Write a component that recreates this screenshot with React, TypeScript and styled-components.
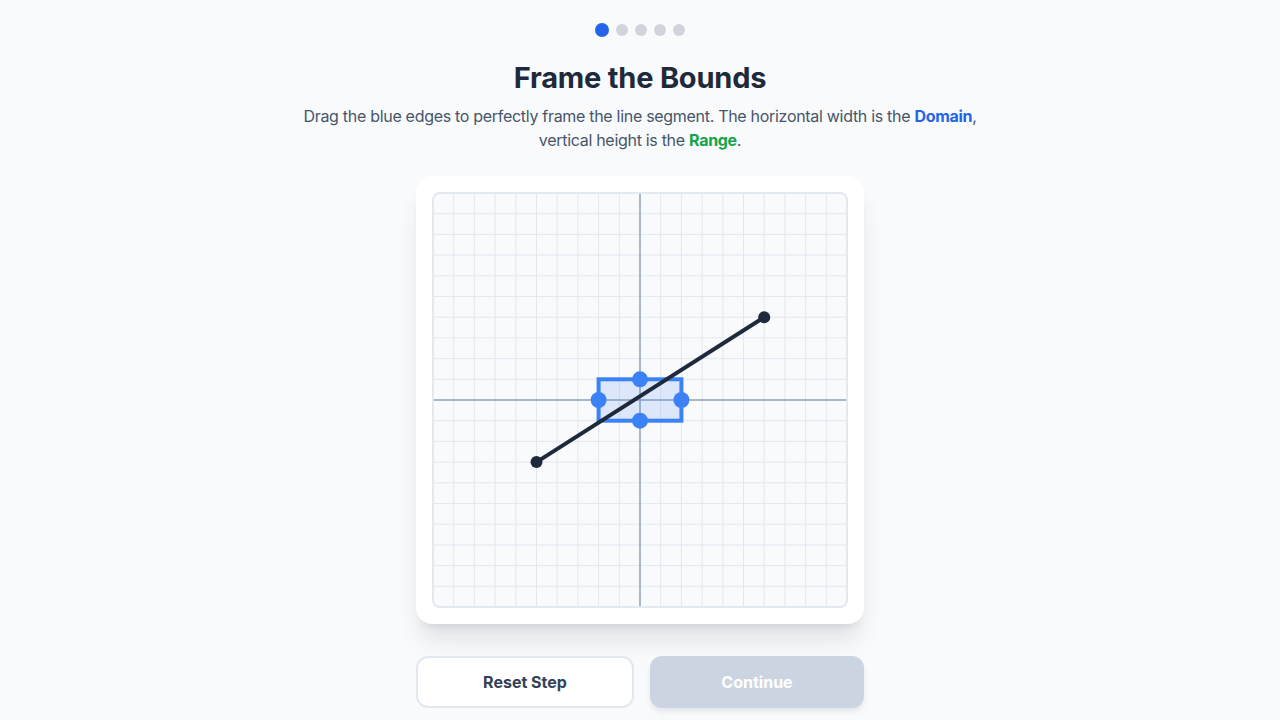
import styled, { createGlobalStyle } from "styled-components";

const GlobalStyle = createGlobalStyle`
  * { box-sizing: border-box; }
  body {
    margin: 0;
    background: #f8fafc;
    font-family: Inter, "Noto Sans", "Liberation Sans", sans-serif;
    color: #1e293b;
  }
`;

const UNIT = 20.7;
const SIZE = 414;
const toX = (u: number) => SIZE / 2 + u * UNIT;
const toY = (u: number) => SIZE / 2 - u * UNIT;

const segment = { x1: -5, y1: -3, x2: 6, y2: 4 };
const box = { left: -2, right: 2, top: 1, bottom: -1 };

export default function App() {
  const ticks = Array.from({ length: 21 }, (_, i) => i - 10);
  const cx = (toX(box.left) + toX(box.right)) / 2;
  const cy = (toY(box.top) + toY(box.bottom)) / 2;

  return (
    <>
      <GlobalStyle />
      <Page>
        <Steps>
          {[0, 1, 2, 3, 4].map((i) => (
            <Dot key={i} $active={i === 0} />
          ))}
        </Steps>
        <Title>Frame the Bounds</Title>
        <Subtitle>
          Drag the blue edges to perfectly frame the line segment. The horizontal width is the{" "}
          <Domain>Domain</Domain>, vertical height is the <Range>Range</Range>.
        </Subtitle>
        <Card>
          <Board>
            <svg width={SIZE} height={SIZE} viewBox={`0 0 ${SIZE} ${SIZE}`}>
              {ticks.map((t) => (
                <g key={t}>
                  <line x1={toX(t)} y1={0} x2={toX(t)} y2={SIZE} stroke="#e2e8f0" strokeWidth={1} />
                  <line x1={0} y1={toY(t)} x2={SIZE} y2={toY(t)} stroke="#e2e8f0" strokeWidth={1} />
                </g>
              ))}
              <line x1={toX(0)} y1={0} x2={toX(0)} y2={SIZE} stroke="#94a3b8" strokeWidth={1.5} />
              <line x1={0} y1={toY(0)} x2={SIZE} y2={toY(0)} stroke="#94a3b8" strokeWidth={1.5} />
              <rect
                x={toX(box.left)}
                y={toY(box.top)}
                width={toX(box.right) - toX(box.left)}
                height={toY(box.bottom) - toY(box.top)}
                fill="rgba(59,130,246,0.15)"
                stroke="#3b82f6"
                strokeWidth={4}
              />
              <line
                x1={toX(segment.x1)}
                y1={toY(segment.y1)}
                x2={toX(segment.x2)}
                y2={toY(segment.y2)}
                stroke="#1e293b"
                strokeWidth={4}
                strokeLinecap="round"
              />
              <circle cx={toX(segment.x1)} cy={toY(segment.y1)} r={6} fill="#1e293b" />
              <circle cx={toX(segment.x2)} cy={toY(segment.y2)} r={6} fill="#1e293b" />
              <circle cx={cx} cy={toY(box.top)} r={8} fill="#3b82f6" />
              <circle cx={cx} cy={toY(box.bottom)} r={8} fill="#3b82f6" />
              <circle cx={toX(box.left)} cy={cy} r={8} fill="#3b82f6" />
              <circle cx={toX(box.right)} cy={cy} r={8} fill="#3b82f6" />
            </svg>
          </Board>
        </Card>
        <Actions>
          <ResetButton type="button">Reset Step</ResetButton>
          <ContinueButton type="button" disabled>
            Continue
          </ContinueButton>
        </Actions>
      </Page>
    </>
  );
}

const Page = styled.div`
  display: flex;
  flex-direction: column;
  align-items: center;
  padding-top: 23px;
  min-height: 720px;
`;

const Steps = styled.div`
  display: flex;
  align-items: center;
  gap: 7px;
  height: 14px;
`;

const Dot = styled.span<{ $active: boolean }>`
  width: ${(p) => (p.$active ? 14 : 12)}px;
  height: ${(p) => (p.$active ? 14 : 12)}px;
  border-radius: 50%;
  background: ${(p) => (p.$active ? "#2563eb" : "#d1d5db")};
`;

const Title = styled.h1`
  margin: 23px 0 0;
  font-size: 29px;
  line-height: 36px;
  font-weight: 700;
  letter-spacing: -0.2px;
  color: #1e293b;
`;

const Subtitle = styled.p`
  margin: 8px 0 0;
  max-width: 700px;
  text-align: center;
  font-size: 16px;
  line-height: 24px;
  letter-spacing: -0.3px;
  color: #475569;
`;

const Domain = styled.strong`
  color: #2563eb;
  font-weight: 700;
`;

const Range = styled.strong`
  color: #16a34a;
  font-weight: 700;
`;

const Card = styled.div`
  margin-top: 24px;
  width: 448px;
  height: 448px;
  padding: 16px;
  background: #ffffff;
  border-radius: 16px;
  box-shadow: 0 20px 25px -5px rgba(15, 23, 42, 0.1), 0 8px 10px -6px rgba(15, 23, 42, 0.1);
`;

const Board = styled.div`
  width: 416px;
  height: 416px;
  border: 2px solid #e2e8f0;
  border-radius: 8px;
  background: #f8fafc;
  overflow: hidden;
  line-height: 0;

  svg {
    display: block;
    margin: -1px;
  }
`;

const Actions = styled.div`
  margin-top: 32px;
  display: flex;
  gap: 16px;
  width: 448px;
`;

const BaseButton = styled.button`
  flex: 1;
  height: 52px;
  border-radius: 12px;
  font-family: inherit;
  font-size: 16px;
  font-weight: 700;
`;

const ResetButton = styled(BaseButton)`
  background: #ffffff;
  border: 2px solid #e2e8f0;
  color: #334155;
  cursor: pointer;
`;

const ContinueButton = styled(BaseButton)`
  background: #cbd5e1;
  border: none;
  color: #ffffff;
  box-shadow: 0 4px 6px -1px rgba(15, 23, 42, 0.1);
  cursor: not-allowed;
`;
